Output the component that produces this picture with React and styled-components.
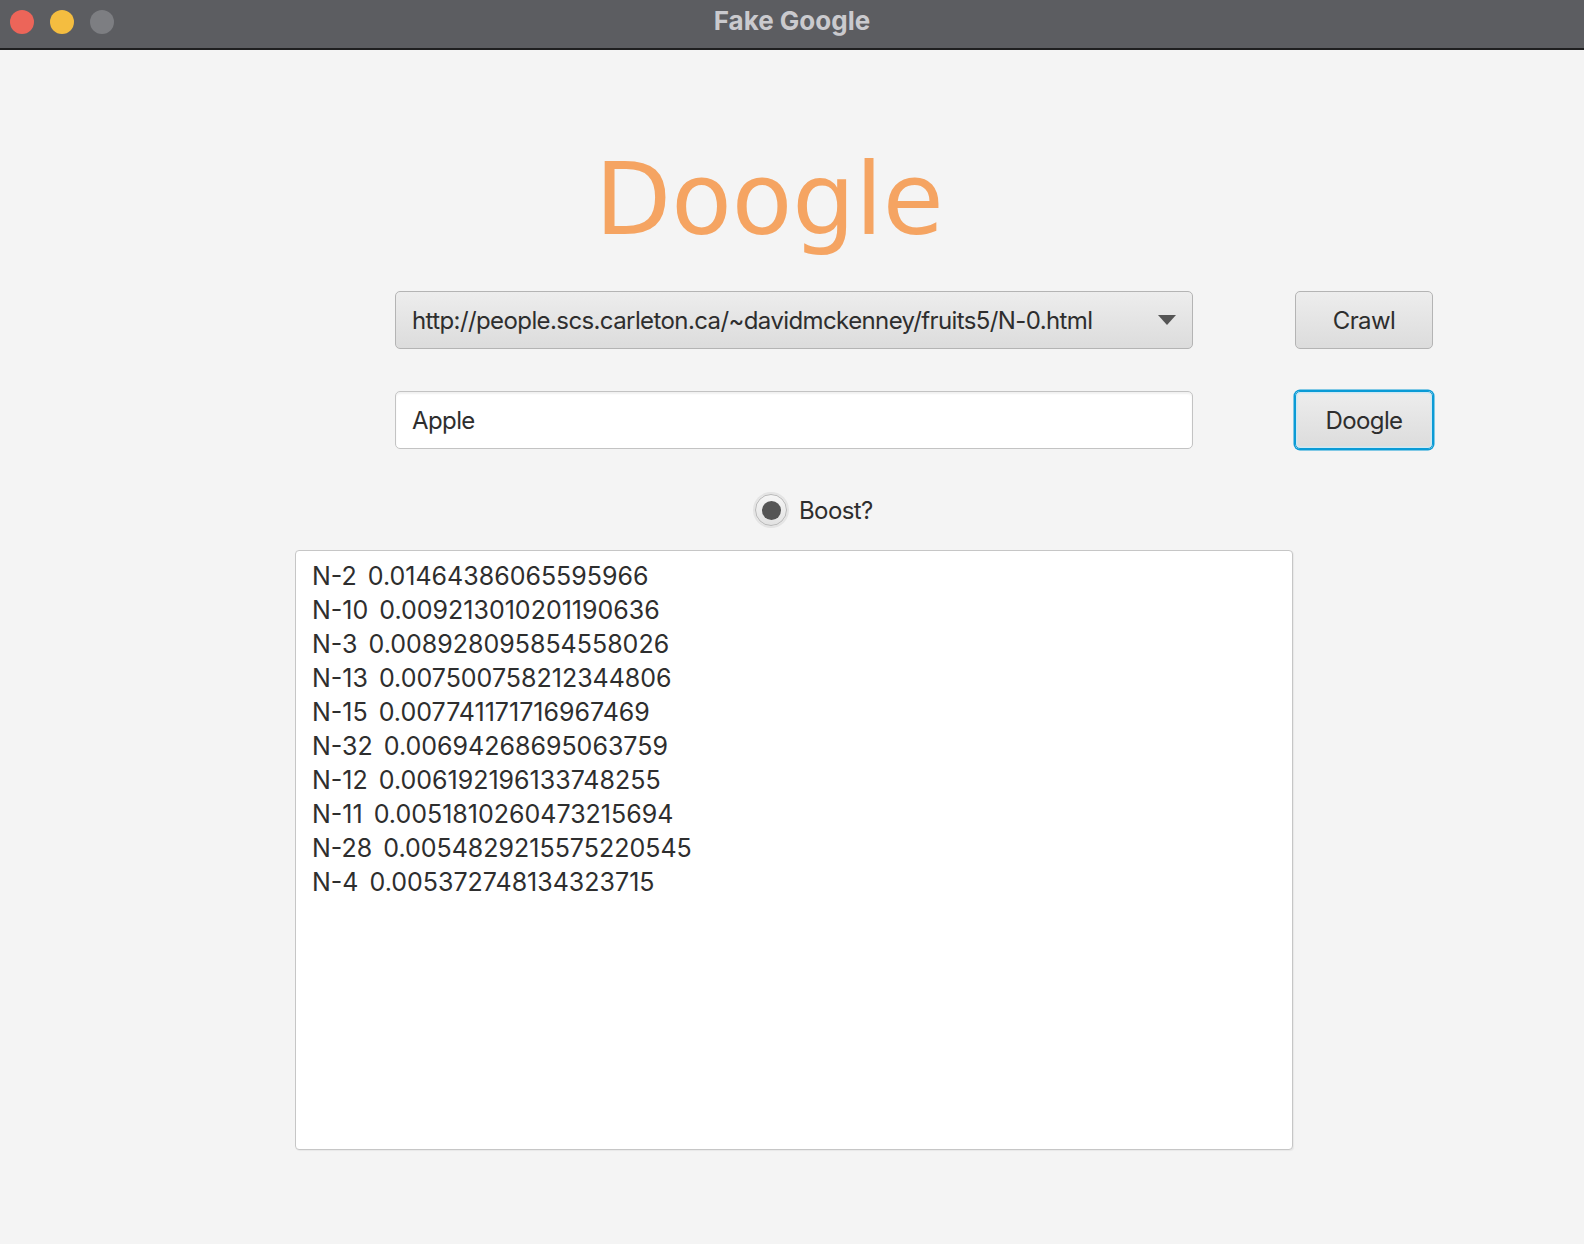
import styled, { createGlobalStyle } from 'styled-components';

const GlobalStyle = createGlobalStyle`
  html, body {
    margin: 0;
    padding: 0;
    background: #f4f4f4;
  }
  body {
    font-family: Inter, "Liberation Sans", sans-serif;
    color: #2e2e2e;
  }
`;

const Window = styled.div`
  display: flex;
  flex-direction: column;
  min-height: 1244px;
  background: #f4f4f4;
`;

const TitleBar = styled.div`
  background: #5c5d61;
  border-bottom: 2px solid #1f1f20;
  box-sizing: border-box;
  display: flex;
  height: 50px;
  justify-content: center;
  padding-top: 6px;
  position: relative;
`;

const Lights = styled.div`
  display: flex;
  gap: 16px;
  left: 10px;
  position: absolute;
  top: 10px;
`;

const Light = styled.span`
  background: ${({ color }) => color};
  border-radius: 50%;
  display: block;
  height: 24px;
  width: 24px;
`;

const WindowTitle = styled.div`
  color: #cacace;
  font-size: 26px;
  font-weight: 700;
  line-height: 30px;
`;

const Content = styled.main`
  display: flex;
  flex-direction: column;
  padding-left: 295px;
`;

const Logo = styled.h1`
  color: #f5a462;
  font-family: "DejaVu Sans", sans-serif;
  font-size: 99px;
  font-weight: 400;
  line-height: 100px;
  margin: 100px 0 0 300px;
`;

const FormGrid = styled.div`
  display: grid;
  gap: 42px 102px;
  grid-template-columns: 798px 138px;
  margin: 41px 0 0 100px;
`;

const controlText = `
  font-family: Inter, "Liberation Sans", sans-serif;
  font-size: 24px;
  letter-spacing: -0.6px;
`;

const Combo = styled.div`
  ${controlText}
  align-items: center;
  background: linear-gradient(#ededed, #dcdcdc);
  border: 1.5px solid #b4b4b4;
  border-radius: 5px;
  box-sizing: border-box;
  display: flex;
  height: 58px;
  justify-content: space-between;
  padding: 0 16px;
  white-space: nowrap;
`;

const Arrow = styled.span`
  border-left: 9px solid transparent;
  border-right: 9px solid transparent;
  border-top: 10px solid #555;
  display: block;
  height: 0;
  width: 0;
`;

const TextField = styled.div`
  ${controlText}
  align-items: center;
  background: #fff;
  border: 1.5px solid #c3c3c3;
  border-radius: 5px;
  box-shadow: inset 0 2px 2px rgba(0, 0, 0, 0.06);
  box-sizing: border-box;
  display: flex;
  height: 58px;
  padding: 0 16px;
`;

const Button = styled.button`
  ${controlText}
  background: linear-gradient(#ededed, #dcdcdc);
  border: 1.5px solid ${({ focused }) => (focused ? '#0a9bd6' : '#b4b4b4')};
  border-radius: 5px;
  box-shadow: ${({ focused }) =>
    focused ? '0 0 0 1.5px #0a9bd6, inset 0 0 0 1.5px #cfe8f3' : 'none'};
  box-sizing: border-box;
  color: #2e2e2e;
  height: 58px;
  padding: 0;
`;

const RadioRow = styled.label`
  ${controlText}
  align-items: center;
  display: flex;
  gap: 12px;
  margin: 45px 0 0 460px;
`;

const RadioOuter = styled.span`
  align-items: center;
  background: linear-gradient(#f6f6f6, #e2e2e2);
  border: 1.5px solid #b8b8b8;
  border-radius: 50%;
  box-shadow: 0 0 0 2px #e4e4e4;
  box-sizing: border-box;
  display: flex;
  height: 32px;
  justify-content: center;
  width: 32px;
`;

const RadioDot = styled.span`
  background: #555;
  border-radius: 50%;
  display: block;
  height: 19px;
  width: 19px;
`;

const Results = styled.div`
  background: #fff;
  border: 1.5px solid #c6c6c6;
  border-radius: 4px;
  box-shadow: 1px 1px 1px rgba(0, 0, 0, 0.05);
  box-sizing: border-box;
  font-size: 25px;
  height: 600px;
  line-height: 34px;
  margin-top: 24px;
  padding: 8px 16px;
  width: 998px;
`;

const ResultLine = styled.div`
  white-space: nowrap;
  word-spacing: 4px;
`;

const results = [
  ['N-2', '0.01464386065595966'],
  ['N-10', '0.009213010201190636'],
  ['N-3', '0.008928095854558026'],
  ['N-13', '0.007500758212344806'],
  ['N-15', '0.007741171716967469'],
  ['N-32', '0.00694268695063759'],
  ['N-12', '0.006192196133748255'],
  ['N-11', '0.0051810260473215694'],
  ['N-28', '0.0054829215575220545'],
  ['N-4', '0.005372748134323715'],
];

const App = () => (
  <Window>
    <GlobalStyle />
    <TitleBar>
      <Lights>
        <Light color="#ec6559" />
        <Light color="#f4bd40" />
        <Light color="#7d7e82" />
      </Lights>
      <WindowTitle>Fake Google</WindowTitle>
    </TitleBar>

    <Content>
      <Logo>Doogle</Logo>

      <FormGrid>
        <Combo>
          <span>http://people.scs.carleton.ca/~davidmckenney/fruits5/N-0.html</span>
          <Arrow />
        </Combo>
        <Button>Crawl</Button>
        <TextField>Apple</TextField>
        <Button focused>Doogle</Button>
      </FormGrid>

      <RadioRow>
        <RadioOuter>
          <RadioDot />
        </RadioOuter>
        Boost?
      </RadioRow>

      <Results>
        {results.map(([page, score]) => (
          <ResultLine key={page}>
            {page} {score}
          </ResultLine>
        ))}
      </Results>
    </Content>
  </Window>
);

export default App;
